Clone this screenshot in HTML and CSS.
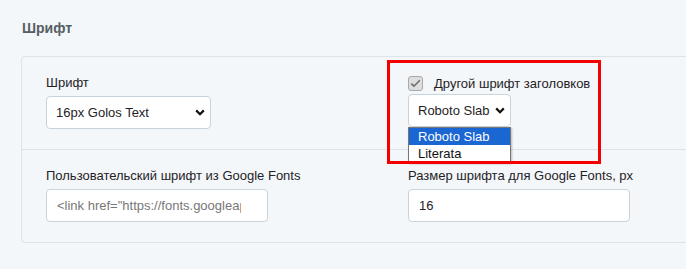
FILE: index.html
```html
<!DOCTYPE html>
<html>
<head>
    <meta charset="utf-8">
    <link rel="stylesheet" href="styles.css">
</head>
<body>
    <h2 class="section-title">Шрифт</h2>

    <div class="panel">
        <div class="row">
            <div class="field">
                <label class="label">Шрифт</label>
                <div class="select-wrap select-main">
                    <select class="select">
                        <option>16px Golos Text</option>
                    </select>
                    <svg class="chevron" width="10" height="7" viewBox="0 0 10 7"><path d="M1.2 1.4 L5 5.2 L8.8 1.4" fill="none" stroke="#111" stroke-width="2.2"/></svg>
                </div>
            </div>
            <div class="field">
                <div class="check-row">
                    <span class="checkbox">
                        <svg width="11" height="9" viewBox="0 0 11 9"><path d="M1.3 4.6 L4 7.2 L9.8 1.3" fill="none" stroke="#6d6d6d" stroke-width="1.6"/></svg>
                    </span>
                    <span>Другой шрифт заголовков</span>
                </div>
                <div class="select-wrap select-small">
                    <select class="select">
                        <option>Roboto Slab</option>
                    </select>
                    <svg class="chevron" width="10" height="7" viewBox="0 0 10 7"><path d="M1.2 1.4 L5 5.2 L8.8 1.4" fill="none" stroke="#111" stroke-width="2.2"/></svg>
                    <ul class="dropdown">
                        <li class="active">Roboto Slab</li>
                        <li>Literata</li>
                    </ul>
                </div>
            </div>
        </div>
        <div class="row">
            <div class="field">
                <label class="label">Пользовательский шрифт из Google Fonts</label>
                <input class="input input-link" type="text" value="&lt;link href=&quot;https://fonts.googleapis.com/css2">
            </div>
            <div class="field">
                <label class="label">Размер шрифта для Google Fonts, px</label>
                <input class="input" type="text" value="16">
            </div>
        </div>
    </div>

    <div class="highlight"></div>
</body>
</html>
```

FILE: styles.css
```css
html {
    overflow: hidden;
}

body {
    margin: 0;
    padding: 0 0 0 21px;
    background: #f4f7f9;
    font-family: "Liberation Sans", Arial, sans-serif;
    font-size: 13px;
    color: #1f2326;
    position: relative;
    height: 269px;
}

.section-title {
    margin: 0;
    padding: 18px 0 18px 1px;
    font-size: 14px;
    line-height: 20px;
    font-weight: bold;
    color: #575e65;
}

.panel {
    border: 1px solid #dce4eb;
    border-right: none;
    border-radius: 4px 0 0 4px;
}

.row {
    display: grid;
    grid-template-columns: 362px 1fr;
    padding: 18px 0 20px 24px;
}

.row + .row {
    border-top: 1px solid #dce4eb;
}

.field {
    display: flex;
    flex-direction: column;
    align-items: flex-start;
}

.label {
    display: block;
    line-height: 16px;
    margin-bottom: 5px;
}

.check-row {
    display: flex;
    align-items: center;
    height: 16px;
    margin-bottom: 3px;
}

.checkbox {
    width: 13px;
    height: 13px;
    border: 1px solid #a9a9a9;
    border-radius: 3px;
    background: #dedede;
    display: flex;
    align-items: center;
    justify-content: center;
    margin-right: 11px;
}

.select-wrap {
    position: relative;
}

.select {
    appearance: none;
    display: block;
    height: 33px;
    padding: 0 14px 0 9px;
    border: 1px solid #c9d3db;
    border-radius: 4px;
    background: #fff;
    font-family: inherit;
    font-size: 13px;
    color: #1f2326;
}

.select-main .select {
    width: 165px;
}

.select-small .select {
    width: 103px;
}

.chevron {
    position: absolute;
    right: 6px;
    top: 13px;
}

.dropdown {
    position: absolute;
    left: 0;
    top: 33px;
    width: 103px;
    margin: 0;
    padding: 0;
    list-style: none;
    background: #fff;
    border: 1px solid #767676;
    box-sizing: border-box;
    box-shadow: 1px 1px 2px rgba(0, 0, 0, 0.25);
}

.dropdown li {
    line-height: 17px;
    padding: 0 9px;
    color: #111;
}

.dropdown li.active {
    background: #1a66d2;
    color: #fff;
}

.input {
    display: block;
    box-sizing: border-box;
    width: 222px;
    height: 33px;
    padding: 0 10px;
    border: 1px solid #c9d3db;
    border-radius: 4px;
    background: #fff;
    font-family: inherit;
    font-size: 13px;
    color: #1f2326;
}

.input-link {
    padding-right: 26px;
    color: #777;
}

.highlight {
    position: absolute;
    left: 387px;
    top: 60px;
    width: 208px;
    height: 98px;
    border: 3px solid #f50000;
}
```
